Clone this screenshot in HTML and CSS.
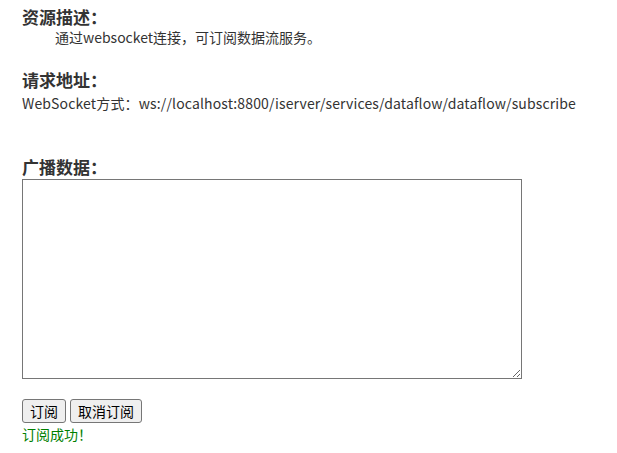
FILE: index.html
```html
<!DOCTYPE html>
<html lang="zh-CN">

<head>
  <meta charset="UTF-8">
  <meta name="viewport" content="width=device-width, initial-scale=1">
  <title>数据流订阅</title>
  <link rel="stylesheet" href="styles.css">
</head>

<body>
  <div class="page">
    <h3 class="title">资源描述：</h3>
    <p class="desc">通过websocket连接，可订阅数据流服务。</p>

    <h3 class="title gap">请求地址：</h3>
    <p class="url">WebSocket方式：ws://localhost:8800/iserver/services/dataflow/dataflow/subscribe</p>

    <h3 class="title gap-lg">广播数据：</h3>
    <textarea class="data" id="dataBox"></textarea>

    <div class="actions">
      <button class="btn">订阅</button>
      <button class="btn">取消订阅</button>
    </div>
    <div class="status">订阅成功！</div>
  </div>
</body>

</html>
```

FILE: styles.css
```css
* {
  margin: 0;
  padding: 0;
  box-sizing: border-box;
}

body {
  background: #fff;
  color: #333;
  font-family: "Noto Sans CJK SC", "Noto Sans", sans-serif;
  font-size: 14px;
}

.page {
  padding: 7px 0 0 22px;
}

.title {
  font-size: 17px;
  font-weight: bold;
  line-height: 20px;
}

.title.gap {
  margin-top: 23px;
}

.title.gap-lg {
  margin-top: 44px;
}

.desc {
  padding-left: 33px;
  line-height: 20px;
}

.url {
  line-height: 20px;
  margin-top: 3px;
  letter-spacing: 0.14px;
}

.data {
  display: block;
  width: 500px;
  height: 200px;
  margin-top: 2px;
  border: 1px solid #767676;
  resize: both;
}

.actions {
  display: flex;
  gap: 4px;
  margin-top: 20px;
}

.btn {
  height: 24px;
  padding: 0 7px;
  font-family: "Noto Sans CJK SC", sans-serif;
  font-size: 14px;
  color: #000;
  background: #efefef;
  border: 1px solid #767676;
  border-radius: 3px;
}

.status {
  color: #008000;
  line-height: 18px;
  margin-top: 2px;
}
```
